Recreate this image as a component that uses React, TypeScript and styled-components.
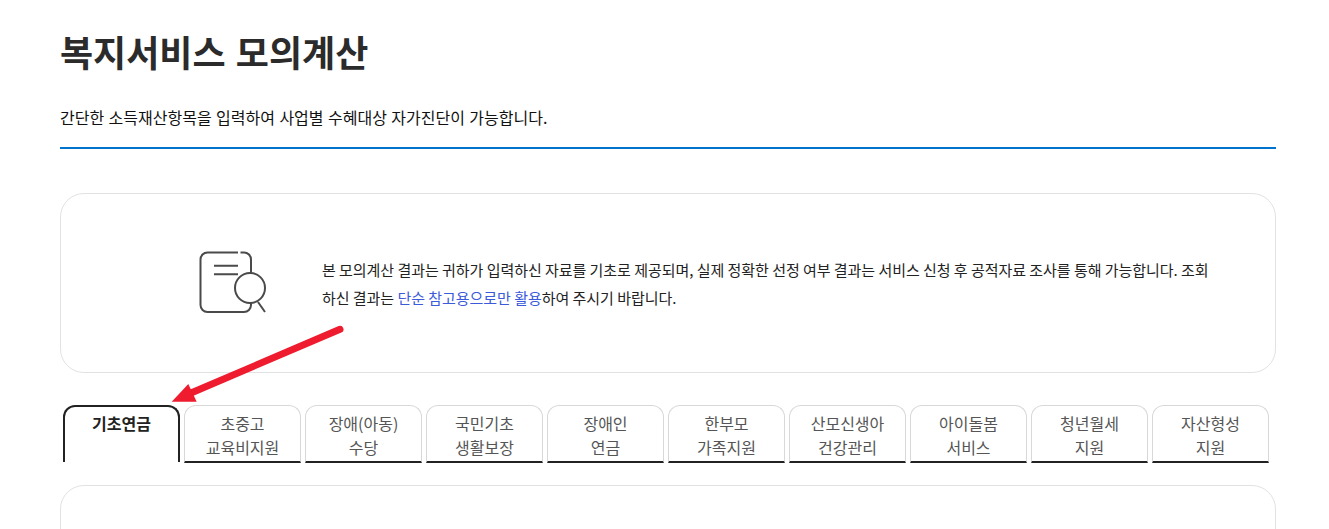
import React from 'react';
import styled, { createGlobalStyle } from 'styled-components';

const tabs = [
  ['기초연금'],
  ['초중고', '교육비지원'],
  ['장애(아동)', '수당'],
  ['국민기초', '생활보장'],
  ['장애인', '연금'],
  ['한부모', '가족지원'],
  ['산모신생아', '건강관리'],
  ['아이돌봄', '서비스'],
  ['청년월세', '지원'],
  ['자산형성', '지원'],
];

const App: React.FC = () => (
  <>
    <GlobalStyle />
    <Page>
      <Title>복지서비스 모의계산</Title>
      <Lead>간단한 소득재산항목을 입력하여 사업별 수혜대상 자가진단이 가능합니다.</Lead>
      <Notice>
        <NoticeIcon width="68" height="62" viewBox="0 0 68 62" fill="none" stroke="#4a4a4a" strokeWidth="2">
          <path d="M39 1.5H8.5a7 7 0 0 0-7 7V54a7 7 0 0 0 7 7H45a7 7 0 0 0 7-7v-2" />
          <path d="M41.5 1.5H45a7 7 0 0 1 7 7V22" />
          <path d="M15 14.7h24M15 23.3h24" />
          <circle cx="51" cy="37" r="15" />
          <path d="M59 51l7 10" />
        </NoticeIcon>
        <NoticeText>
          본 모의계산 결과는 귀하가 입력하신 자료를 기초로 제공되며, 실제 정확한 선정 여부 결과는 서비스 신청 후 공적자료 조사를 통해 가능합니다. 조회하신 결과는{' '}
          <Accent>단순 참고용으로만 활용</Accent>하여 주시기 바랍니다.
        </NoticeText>
      </Notice>
      <TabBar>
        {tabs.map((lines, i) => (
          <Tab key={lines.join()} $active={i === 0}>
            {lines.map((line) => (
              <TabLine key={line}>{line}</TabLine>
            ))}
          </Tab>
        ))}
      </TabBar>
      <NextCard />
      <Arrow width="176" height="82" viewBox="0 0 176 82">
        <path d="M169 5.3L20 69" stroke="#ee1c2e" strokeWidth="7" strokeLinecap="round" fill="none" />
        <path d="M0.7 77.7L17.3 60L25.7 77.7Z" fill="#ee1c2e" />
      </Arrow>
    </Page>
  </>
);

export default App;

const GlobalStyle = createGlobalStyle`
  html, body {
    margin: 0;
    height: 529px;
    overflow: hidden;
    background: #fff;
  }
  body {
    font-family: "Noto Sans CJK KR", "Noto Sans", sans-serif;
  }
`;

const Page = styled.div`
  position: relative;
  box-sizing: border-box;
  width: 1329px;
  height: 529px;
  overflow: hidden;
  padding: 25px 53px 0 60px;
`;

const Title = styled.h1`
  margin: 0;
  font-size: 36px;
  line-height: 52px;
  font-weight: 700;
  word-spacing: 2px;
  color: #2b2b2b;
`;

const Lead = styled.p`
  margin: 0;
  padding: 28px 0 18px;
  height: 24px;
  font-size: 16px;
  line-height: 24px;
  word-spacing: 0.85px;
  color: #111;
  border-bottom: 2px solid #0073cf;
`;

const Notice = styled.div`
  box-sizing: border-box;
  display: flex;
  align-items: center;
  height: 180px;
  margin-top: 44px;
  padding: 0 60px 0 138px;
  border: 1px solid #e2e2e2;
  border-radius: 24px;
`;

const NoticeIcon = styled.svg`
  flex: none;
  margin: 0 55px 2px 0;
`;

const NoticeText = styled.p`
  margin: 2px 0 0;
  font-size: 15px;
  line-height: 28px;
  letter-spacing: -0.04px;
  word-break: break-all;
  color: #222;
`;

const Accent = styled.span`
  color: #3b5bdb;
`;

const TabBar = styled.div`
  display: flex;
  gap: 4px;
  margin: 32px 0 0 3px;
`;

const Tab = styled.div<{ $active: boolean }>`
  box-sizing: border-box;
  flex: none;
  width: 117px;
  height: ${(p) => (p.$active ? '57px' : '58px')};
  padding-top: ${(p) => (p.$active ? '4px' : '5px')};
  text-align: center;
  font-size: 16px;
  line-height: 24px;
  font-weight: ${(p) => (p.$active ? 700 : 400)};
  color: ${(p) => (p.$active ? '#222' : '#555')};
  border-radius: 12px 12px 0 0;
  border: ${(p) => (p.$active ? '2px solid #222' : '1px solid #d8d8d8')};
  border-bottom: ${(p) => (p.$active ? '0' : '2px solid #222')};
`;

const TabLine = styled.div`
  white-space: nowrap;
`;

const NextCard = styled.div`
  height: 120px;
  margin-top: 22px;
  border: 1px solid #e2e2e2;
  border-radius: 24px;
`;

const Arrow = styled.svg`
  position: absolute;
  left: 171px;
  top: 324px;
`;
